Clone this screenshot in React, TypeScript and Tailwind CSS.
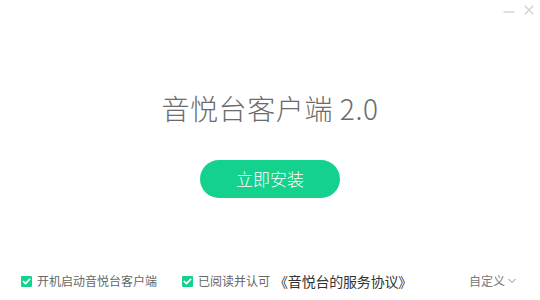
import React from "react";

const font = { fontFamily: '"Noto Sans CJK SC", "Noto Sans", sans-serif' };

function Check() {
  return (
    <span className="flex h-[11px] w-[11px] items-center justify-center rounded-[1px] bg-[#15d18e]">
      <svg width="9" height="9" viewBox="0 0 10 10">
        <path d="M1.6 5.2 L4 7.4 L8.4 2.6" fill="none" stroke="#fff" strokeWidth="1.9" strokeLinecap="square" />
      </svg>
    </span>
  );
}

export default function App() {
  return (
    <div className="flex h-[300px] w-[540px] flex-col bg-white" style={font}>
      <div className="flex h-[20px] items-start justify-end gap-[9px] pr-[6px] pt-[5px]">
        <svg width="12" height="10" viewBox="0 0 12 10">
          <path d="M0.5 7 H11.5" stroke="#d0d0d0" strokeWidth="1.3" />
        </svg>
        <svg width="10" height="10" viewBox="0 0 10 10">
          <path d="M0.8 0.8 L9.2 9.2 M9.2 0.8 L0.8 9.2" stroke="#d0d0d0" strokeWidth="1.3" />
        </svg>
      </div>
      <div className="mt-[73px] flex justify-center">
        <h1 className="text-[28px] leading-[30px] font-light tracking-[0.6px] text-[#6b6b6b]">音悦台客户端 2.0</h1>
      </div>
      <div className="mt-[37px] flex justify-center">
        <button className="h-[38px] w-[140px] rounded-full bg-[#15d18e] text-[17px] leading-[38px] font-light text-white">
          立即安装
        </button>
      </div>
      <div className="mt-auto mb-[9px] flex h-[20px] items-center pl-[21px] pr-[24px] text-[12px] text-[#666]">
        <div className="flex items-center gap-[5px]">
          <Check />
          <span>开机启动音悦台客户端</span>
        </div>
        <div className="ml-[25px] flex items-center gap-[5px]">
          <Check />
          <span>已阅读并认可</span>
        </div>
        <span className="ml-[4px] text-[14px] tracking-[-0.2px] text-[#333]">《音悦台的服务协议》</span>
        <div className="ml-auto flex items-center gap-[3px] text-[#777]">
          <span>自定义</span>
          <svg width="8" height="6" viewBox="0 0 8 6">
            <path d="M0.5 1 L4 4.5 L7.5 1" fill="none" stroke="#888" strokeWidth="1" />
          </svg>
        </div>
      </div>
    </div>
  );
}
